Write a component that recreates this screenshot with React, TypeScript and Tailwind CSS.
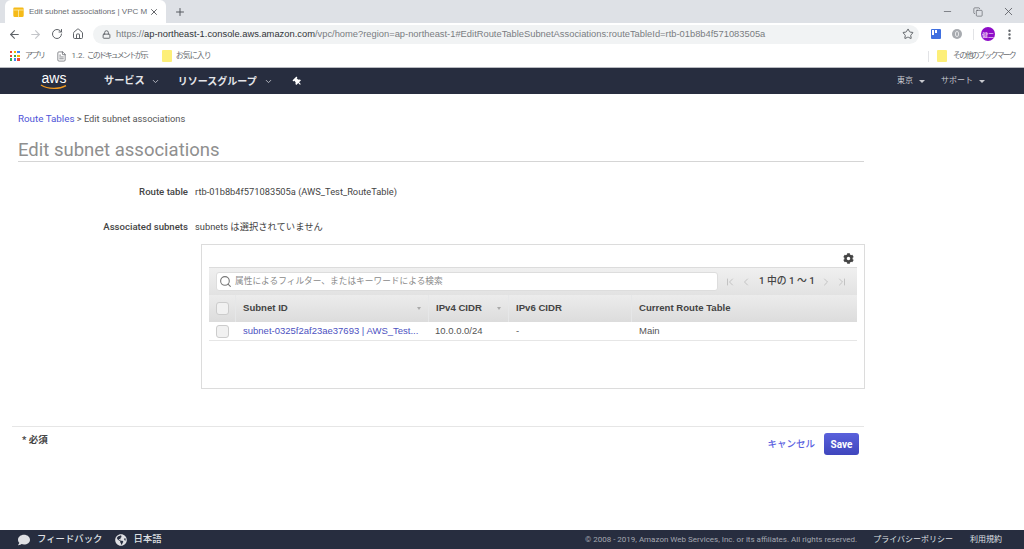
import React from "react";
import {
  ArrowLeft,
  ArrowRight,
  RotateCw,
  Home,
  Lock,
  Star,
  FileText,
  Plus,
  X,
  Minus,
  Copy,
  MoreVertical,
  Search,
  ChevronDown,
  ChevronLeft,
  ChevronRight,
  ChevronFirst,
  ChevronLast,
} from "lucide-react";
import { FaCog, FaThumbtack, FaGlobeAmericas, FaComment } from "react-icons/fa";

const jp = "font-['Roboto','Noto_Sans_CJK_JP',sans-serif]";
const arial = "font-['Liberation_Sans','Noto_Sans_CJK_JP',sans-serif]";

function Folder() {
  return <span className="block w-[10px] h-[12px] bg-[#fdef78] rounded-[1px]" />;
}

function Caret() {
  return (
    <span className="ml-[6px] w-0 h-0 border-x-[3px] border-x-transparent border-t-[3px] border-t-[#c8cad0]" />
  );
}

function AppsIcon() {
  const colors = ["#e8453c", "#f4b400", "#4285f4", "#e8453c", "#34a853", "#f4b400", "#34a853", "#4285f4", "#e8453c"];
  return (
    <div className="grid grid-cols-3 gap-[1px] w-[10px] h-[10px]">
      {colors.map((c, i) => (
        <span key={i} className="w-[2.4px] h-[2.4px]" style={{ background: c }} />
      ))}
    </div>
  );
}

function BrowserChrome() {
  return (
    <div className="shrink-0">
      <div className="h-[23px] bg-[#dee1e6] flex pl-[5px]">
        <div className="w-[161px] h-full bg-white rounded-t-[6px] flex items-center pl-[8px] pr-[7px]">
          <svg width="11" height="12" viewBox="0 0 11 12" className="shrink-0">
            <path d="M1.5 1.5h8a1.2 1.2 0 0 1 1.2 1.2v6.8a1.5 1.5 0 0 1-1.5 1.5H1.8A1.5 1.5 0 0 1 .3 9.5V2.7A1.2 1.2 0 0 1 1.5 1.5z" fill="#f5ba18" />
            <path d="M.5 4h10M5.5 4v7.5" stroke="#fff3c4" strokeWidth=".7" fill="none" />
          </svg>
          <span className={`ml-[5px] text-[8px] text-[#6a6d72] whitespace-nowrap flex-1 ${arial}`}>
            Edit subnet associations | VPC M
          </span>
          <X size={10} strokeWidth={2} className="text-[#44474c] shrink-0" />
        </div>
        <Plus size={12} strokeWidth={2} className="ml-[8px] self-center text-[#55585e]" />
        <div className="ml-auto h-full flex items-center text-[#55585e]">
          <Minus size={11} strokeWidth={1.5} className="mr-[20px]" />
          <Copy size={10} strokeWidth={1.5} className="mr-[19px]" />
          <X size={13} strokeWidth={1.5} className="mr-[9px]" />
        </div>
      </div>
      <div className="h-[22px] bg-white flex items-center text-[#5f6368]">
        <ArrowLeft size={13} strokeWidth={2} className="ml-[8px]" />
        <ArrowRight size={13} strokeWidth={2} className="ml-[8px] text-[#c4c6ca]" />
        <RotateCw size={12} strokeWidth={2} className="ml-[9px]" />
        <Home size={12} strokeWidth={2} className="ml-[9px]" />
        <div className="ml-[9px] w-[826px] h-[19px] rounded-full bg-[#f1f3f4] flex items-center pl-[9px] pr-[5px]">
          <Lock size={9} strokeWidth={2.5} className="shrink-0" />
          <span className={`ml-[5px] text-[9.35px] text-[#7a7d82] whitespace-nowrap flex-1 ${arial}`}>
            https://<span className="text-[#303338]">ap-northeast-1.console.aws.amazon.com</span>
            /vpc/home?region=ap-northeast-1#EditRouteTableSubnetAssociations:routeTableId=rtb-01b8b4f571083505a
          </span>
          <Star size={12} strokeWidth={2} className="shrink-0" />
        </div>
        <span className="ml-[12px] w-[10px] h-[10px] rounded-[1px] bg-[#3f6fe0] flex items-start pl-[1px] pt-[1px] gap-[1px]">
          <span className="w-[2px] h-[5px] bg-white" />
          <span className="w-[2px] h-[3px] bg-white" />
        </span>
        <span className="ml-[11px] w-[10px] h-[10px] rounded-full bg-[#a8abb0] flex items-center justify-center">
          <span className="w-[4px] h-[6px] rounded-full border border-[#e4e5e7]" />
        </span>
        <span className="ml-[11px] w-[1px] h-[11px] bg-[#e2e3e6]" />
        <span className={`ml-[7px] w-[14px] h-[14px] rounded-full bg-[#8e0cc8] text-white text-[6px] flex items-center justify-center ${jp}`}>
          健二
        </span>
        <MoreVertical size={13} strokeWidth={2.5} className="ml-[8px]" />
      </div>
      <div className={`h-[23px] bg-white flex items-center text-[8px] text-[#6a6d72] border-b border-[#b8bac0] ${jp}`}>
        <div className="ml-[10px]">
          <AppsIcon />
        </div>
        <span className="ml-[5px] tracking-[-1.5px]">アプリ</span>
        <FileText size={11} strokeWidth={1.5} className="ml-[11px] text-[#55585e]" />
        <span className="ml-[5px] whitespace-nowrap">
          1.2. <span className="tracking-[-2px]">このドキュメントが示</span>
        </span>
        <div className="ml-[15px]">
          <Folder />
        </div>
        <span className="ml-[4px] tracking-[-1px]">お気に入り</span>
        <span className="ml-auto w-[1px] h-[11px] bg-[#e2e3e6]" />
        <div className="ml-[8px]">
          <Folder />
        </div>
        <span className="ml-[6px] mr-[9px] tracking-[-1.8px]">その他のブックマーク</span>
      </div>
    </div>
  );
}

function AwsNav() {
  return (
    <div className={`h-[26px] shrink-0 bg-[#272d3f] flex items-center text-[#e4e5e9] ${jp}`}>
      <div className="ml-[40px] w-[28px] flex flex-col items-center leading-none">
        <span className={`text-[14px] leading-[11px] text-white ${arial}`}>aws</span>
        <svg width="28" height="6" viewBox="0 0 28 6">
          <path d="M1 1c7 4.5 18 4.5 25 .6" fill="none" stroke="#f29a1f" strokeWidth="1.3" />
        </svg>
      </div>
      <span className="ml-[36px] text-[10.2px] font-bold">サービス</span>
      <ChevronDown size={9} strokeWidth={2.5} className="ml-[6px] text-[#b8bac2]" />
      <span className="ml-[18px] text-[10px] font-bold">リソースグループ</span>
      <ChevronDown size={9} strokeWidth={2.5} className="ml-[7px] text-[#b8bac2]" />
      <FaThumbtack size={9} className="ml-[20px] text-white -rotate-45" />
      <span className="ml-auto text-[8px] text-[#c8cad0]">東京</span>
      <Caret />
      <span className="ml-[16px] text-[8px] text-[#c8cad0]">サポート</span>
      <span className="mr-[39px] flex items-center">
        <Caret />
      </span>
    </div>
  );
}

function Th({ w, label, sort }: { w: string; label: string; sort?: boolean }) {
  return (
    <div className={`${w} h-full shrink-0 flex items-center pl-[7px] pr-[7px] border-l border-[#e6e7e8] font-bold text-[#444]`}>
      <span className="flex-1 whitespace-nowrap">{label}</span>
      {sort && <span className="w-0 h-0 border-x-[2px] border-x-transparent border-t-[3px] border-t-[#aaa]" />}
    </div>
  );
}

function Checkbox() {
  return <span className="block w-[13px] h-[13px] rounded-[3px] border border-[#ccc] bg-[#f1f1f1]" />;
}

function SubnetTable() {
  return (
    <div className={`ml-[201px] w-[664px] h-[145px] border border-[#dcdcdc] px-[7px] text-[9.6px] ${arial}`}>
      <div className="h-[22px] flex items-center justify-end pr-[3px] pt-[5px]">
        <FaCog size={11} className="text-[#444]" />
      </div>
      <div className="h-[28px] bg-gradient-to-b from-[#f0f0f0] to-[#e2e2e2] border-t border-[#dcdcdc] flex items-center pl-[7px]">
        <div className="w-[502px] h-[19px] bg-white border border-[#ddd] rounded-[3px] flex items-center pl-[2px]">
          <Search size={13} strokeWidth={2} className="text-[#777]" />
          <span className={`ml-[3px] text-[8.7px] text-[#8a8a8a] ${jp}`}>属性によるフィルター、またはキーワードによる検索</span>
        </div>
        <div className="ml-[6px] flex items-center text-[#b5b5b5]">
          <ChevronFirst size={12} strokeWidth={1.5} />
          <ChevronLeft size={12} strokeWidth={1.5} className="ml-[4px]" />
          <span className={`ml-[7px] mr-[5px] text-[9.8px] font-medium text-[#444] ${jp}`}>1 中の 1 ～ 1</span>
          <ChevronRight size={12} strokeWidth={1.5} />
          <ChevronLast size={12} strokeWidth={1.5} className="ml-[4px]" />
        </div>
      </div>
      <div className="h-[27px] bg-gradient-to-b from-[#ececec] to-[#dcdcdc] flex items-center">
        <div className="w-[26px] pl-[7px] shrink-0">
          <Checkbox />
        </div>
        <Th w="w-[193px]" label="Subnet ID" sort />
        <Th w="w-[80px]" label="IPv4 CIDR" sort />
        <Th w="w-[123px]" label="IPv6 CIDR" />
        <Th w="w-[226px]" label="Current Route Table" />
      </div>
      <div className="h-[19px] flex items-center border-b border-[#e6e6e6] text-[#555] text-[9.5px]">
        <div className="w-[26px] pl-[7px] shrink-0">
          <Checkbox />
        </div>
        <div className="w-[193px] shrink-0 pl-[8px] text-[#4d52c1] whitespace-nowrap">
          subnet-0325f2af23ae37693 | AWS_Test...
        </div>
        <div className="w-[80px] shrink-0 pl-[7px]">10.0.0.0/24</div>
        <div className="w-[123px] shrink-0 pl-[8px]">-</div>
        <div className="pl-[8px]">Main</div>
      </div>
    </div>
  );
}

export default function App() {
  return (
    <div className={`w-[1024px] h-[549px] bg-white flex flex-col overflow-hidden ${jp}`}>
      <BrowserChrome />
      <AwsNav />
      <main className="flex-1 min-h-0">
        <div className="pl-[18px] pt-[18px] text-[9.3px] leading-[13px] text-[#555]">
          <span className="text-[#4f55d8] text-[9.8px]">Route Tables</span> &gt; Edit subnet associations
        </div>
        <h1 className="ml-[18px] w-[846px] mt-[14px] h-[23px] text-[18.5px] leading-[23px] text-[#8f8f8f] border-b border-[#d5d5d5]">
          Edit subnet associations
        </h1>
        <div className="mt-[22px] flex items-center text-[9.3px] leading-[16px] text-[#444]">
          <span className="w-[188px] text-right font-medium text-[9.6px]">Route table</span>
          <span className="ml-[7px]">rtb-01b8b4f571083505a (AWS_Test_RouteTable)</span>
        </div>
        <div className="mt-[19px] flex items-center text-[9.3px] leading-[16px] text-[#444]">
          <span className="w-[188px] text-right font-medium text-[9.6px]">Associated subnets</span>
          <span className="ml-[7px]">subnets は選択されていません</span>
        </div>
        <div className="mt-[9px]">
          <SubnetTable />
        </div>
        <div className="mt-[37px] ml-[12px] w-[852px] border-t border-[#e6e6e6] flex justify-between pt-[6px]">
          <span className="ml-[10px] text-[9.5px] font-bold text-[#444]">* 必須</span>
          <div className="flex items-center mr-[5px]">
            <span className="text-[9.5px] font-medium text-[#5a60e0]">キャンセル</span>
            <button className="ml-[9px] w-[35px] h-[22px] rounded-[3px] bg-gradient-to-b from-[#5a61dc] to-[#3f46bd] text-white text-[10px] font-bold">
              Save
            </button>
          </div>
        </div>
      </main>
      <footer className="h-[19px] shrink-0 bg-[#272d3f] flex items-center text-[9.4px] text-[#dfe0e4]">
        <FaComment size={12} className="ml-[18px]" />
        <span className="ml-[7px] font-medium">フィードバック</span>
        <FaGlobeAmericas size={12} className="ml-[13px]" />
        <span className="ml-[6px] font-medium">日本語</span>
        <span className="ml-auto text-[8px] text-[#a4a7b0]">© 2008 - 2019, Amazon Web Services, Inc. or its affiliates. All rights reserved.</span>
        <span className="ml-[16px] text-[8px]">プライバシーポリシー</span>
        <span className="ml-[17px] mr-[22px] text-[8px]">利用規約</span>
      </footer>
    </div>
  );
}
